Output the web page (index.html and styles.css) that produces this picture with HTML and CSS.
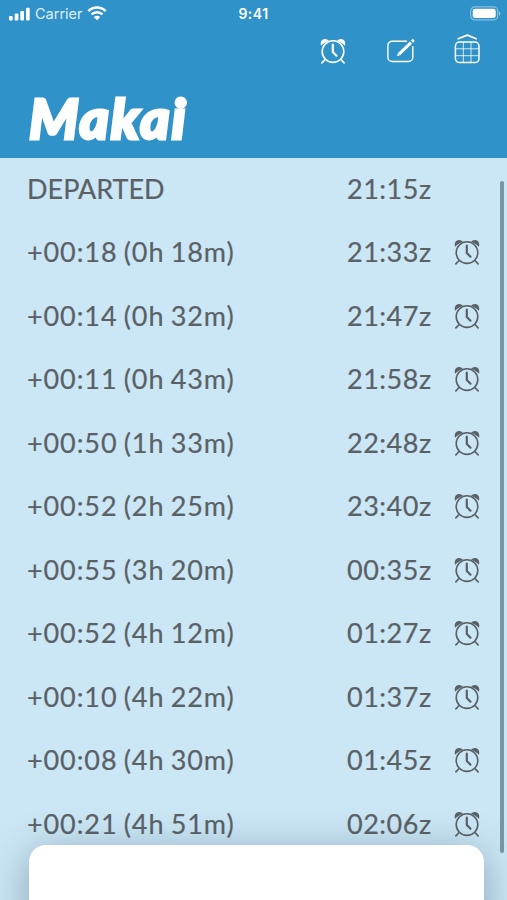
FILE: index.html
```html
<!DOCTYPE html>
<html lang="en">
<head>
<meta charset="utf-8">
<title>Makai</title>
<link rel="stylesheet" href="styles.css">
</head>
<body>
<svg class="defs" width="0" height="0">
  <symbol id="alarm" viewBox="0 0 26 26">
    <g fill="none" stroke="currentColor" stroke-linecap="round">
      <circle cx="13" cy="13.6" r="10.8" stroke-width="1.6"/>
      <path d="M5.1 21.5 1.9 24.8M20.9 21.5l3.2 3.3" stroke-width="1.7"/>
      <path d="M12.8 6.7V14l3.7 3.7" stroke-width="2.2" stroke-linejoin="round"/>
    </g>
    <path fill="currentColor" d="M1.2 7.8C-.1 4.6 1.4 1.1 4.6.9 6.5.8 8.3 1.6 8.9 3.1 5.7 4 3 5.9 1.2 7.8ZM24.8 7.8c1.3-3.2-.2-6.7-3.4-6.9-1.9-.1-3.7.7-4.3 2.2 3.2.9 5.9 2.8 7.7 4.7Z"/>
  </symbol>
</svg>
<div class="screen">
  <header class="header">
    <div class="status">
      <div class="status-left">
        <svg width="22" height="14" viewBox="0 0 22 14" fill="#fff"><rect x="0" y="9" width="3.7" height="4.5" rx="1"/><rect x="5.7" y="6.6" width="3.7" height="6.9" rx="1"/><rect x="11.3" y="3.9" width="3.7" height="9.6" rx="1"/><rect x="17" y=".7" width="3.7" height="12.8" rx="1"/></svg>
        <span class="carrier">Carrier</span>
        <svg class="wifi" width="20" height="15" viewBox="0 0 20 15"><path d="M1.3 5.1C6.2.4 13.8.4 18.7 5.1M4.5 8.4c3.1-2.9 7.9-2.9 11 0" fill="none" stroke="#fff" stroke-width="2.5"/><path d="M6.8 11c1.8-1.6 4.6-1.6 6.4 0L10 14.2Z" fill="#fff"/></svg>
      </div>
      <div class="clock">9:41</div>
      <svg class="battery" width="31" height="15" viewBox="0 0 31 15"><rect x=".7" y=".9" width="27" height="13" rx="4" fill="none" stroke="#fff" stroke-opacity=".42" stroke-width="1.2"/><rect x="2.7" y="2.8" width="23" height="9.2" rx="2.3" fill="#fff"/><path d="M29 5.2c1.8.8 1.8 3.8 0 4.6Z" fill="#fff" fill-opacity=".5"/></svg>
    </div>
    <div class="toolbar">
      <svg class="alarm" width="26" height="26"><use href="#alarm"/></svg>
      <svg width="30" height="28" viewBox="0 0 30 28" fill="none" stroke="#fff"><path d="M20.5 4.3H6.2A4.3 4.3 0 0 0 1.9 8.6v11.6a4.3 4.3 0 0 0 4.3 4.3h16.3a4.3 4.3 0 0 0 4.3-4.3V9.8" stroke-width="1.4" stroke-linecap="round"/><path d="m13 17.2 12-11.6" stroke-width="3"/><path d="m26 4.6 1.8-1.7" stroke-width="3"/><path d="m11 19.3.9-3.1 2.1 2.1Z" fill="#fff" stroke="none"/></svg>
      <svg class="grid-icon" width="28" height="30" viewBox="0 0 28 30" fill="none" stroke="#fff"><rect x="2.4" y="8" width="23.6" height="20.6" rx="4.2" stroke-width="1.5"/><path d="M10.3 8v21M18 8v21M2.4 14.8H26M2.4 21.7H26" stroke-width="1" stroke-opacity=".8"/><path d="m5.2 4.8 9-3.7 9 3.7" stroke-width="1.7" stroke-linecap="round" stroke-linejoin="round"/></svg>
    </div>
    <h1 class="logo">Makai</h1>
  </header>
  <main class="list">
    <div class="row"><span class="leg departed">DEPARTED</span><span class="time">21:15z</span></div>
    <div class="row"><span class="leg">+00:18 (0h 18m)</span><span class="time">21:33z</span><svg class="alarm"><use href="#alarm"/></svg></div>
    <div class="row"><span class="leg">+00:14 (0h 32m)</span><span class="time">21:47z</span><svg class="alarm"><use href="#alarm"/></svg></div>
    <div class="row"><span class="leg">+00:11 (0h 43m)</span><span class="time">21:58z</span><svg class="alarm"><use href="#alarm"/></svg></div>
    <div class="row"><span class="leg">+00:50 (1h 33m)</span><span class="time">22:48z</span><svg class="alarm"><use href="#alarm"/></svg></div>
    <div class="row"><span class="leg">+00:52 (2h 25m)</span><span class="time">23:40z</span><svg class="alarm"><use href="#alarm"/></svg></div>
    <div class="row"><span class="leg">+00:55 (3h 20m)</span><span class="time">00:35z</span><svg class="alarm"><use href="#alarm"/></svg></div>
    <div class="row"><span class="leg">+00:52 (4h 12m)</span><span class="time">01:27z</span><svg class="alarm"><use href="#alarm"/></svg></div>
    <div class="row"><span class="leg">+00:10 (4h 22m)</span><span class="time">01:37z</span><svg class="alarm"><use href="#alarm"/></svg></div>
    <div class="row"><span class="leg">+00:08 (4h 30m)</span><span class="time">01:45z</span><svg class="alarm"><use href="#alarm"/></svg></div>
    <div class="row"><span class="leg">+00:21 (4h 51m)</span><span class="time">02:06z</span><svg class="alarm"><use href="#alarm"/></svg></div>
  </main>
  <div class="scrollbar"></div>
  <div class="sheet"></div>
</div>
</body>
</html>
```

FILE: styles.css
```css
* { box-sizing: border-box; }
body { margin: 0; }
.defs { position: absolute; }
.screen {
  position: relative;
  height: 900px;
  overflow: hidden;
  background: #cbe6f4;
  color: #5a6166;
  font-family: Lato, sans-serif;
}
.header {
  display: flex;
  flex-direction: column;
  height: 157.5px;
  background: #2f92c8;
  color: #fff;
}
.status {
  display: grid;
  grid-template-columns: 1fr auto 1fr;
  align-items: center;
  height: 27px;
  padding: 0 9px;
  font-family: Inter, sans-serif;
}
.status-left { display: flex; align-items: center; }
.carrier { margin-left: 4px; font-size: 14.5px; opacity: .85; }
.wifi { margin-left: 4px; }
.clock { font-size: 14px; font-weight: 600; letter-spacing: .5px; }
.battery { justify-self: end; margin-right: -3px; }
.toolbar {
  display: flex;
  justify-content: flex-end;
  align-items: center;
  gap: 38px;
  height: 48px;
  padding-right: 26px;
}
.toolbar .alarm { margin-right: 2px; }
.grid-icon { margin: -4px 0 0 -1px; }
.logo {
  margin: 11px 0 0 29px;
  font-size: 56px;
  line-height: 64px;
  font-weight: 900;
  font-style: italic;
  letter-spacing: 1.8px;
  -webkit-text-stroke: 3px #fff;
}
.list { margin-top: -.5px; padding-left: 27px; }
.row {
  display: grid;
  grid-template-columns: 320px 107px 26px;
  align-items: center;
  height: 63.5px;
  font-size: 27px;
  line-height: 32px;
  white-space: nowrap;
  -webkit-text-stroke: .2px currentColor;
}
.leg { letter-spacing: .9px; word-spacing: -1.5px; }
.departed { letter-spacing: 0; }
.time { letter-spacing: .5px; }
.alarm { display: block; width: 26px; height: 26px; }
.scrollbar {
  position: absolute;
  left: 500px;
  top: 181px;
  width: 3.5px;
  height: 672px;
  border-radius: 2px;
  background: #7797a7;
}
.sheet {
  position: absolute;
  left: 29px;
  top: 845px;
  width: 455px;
  height: 90px;
  border-radius: 17px;
  background: #fff;
  box-shadow: 0 8px 40px rgba(40, 75, 100, .42);
}
```
